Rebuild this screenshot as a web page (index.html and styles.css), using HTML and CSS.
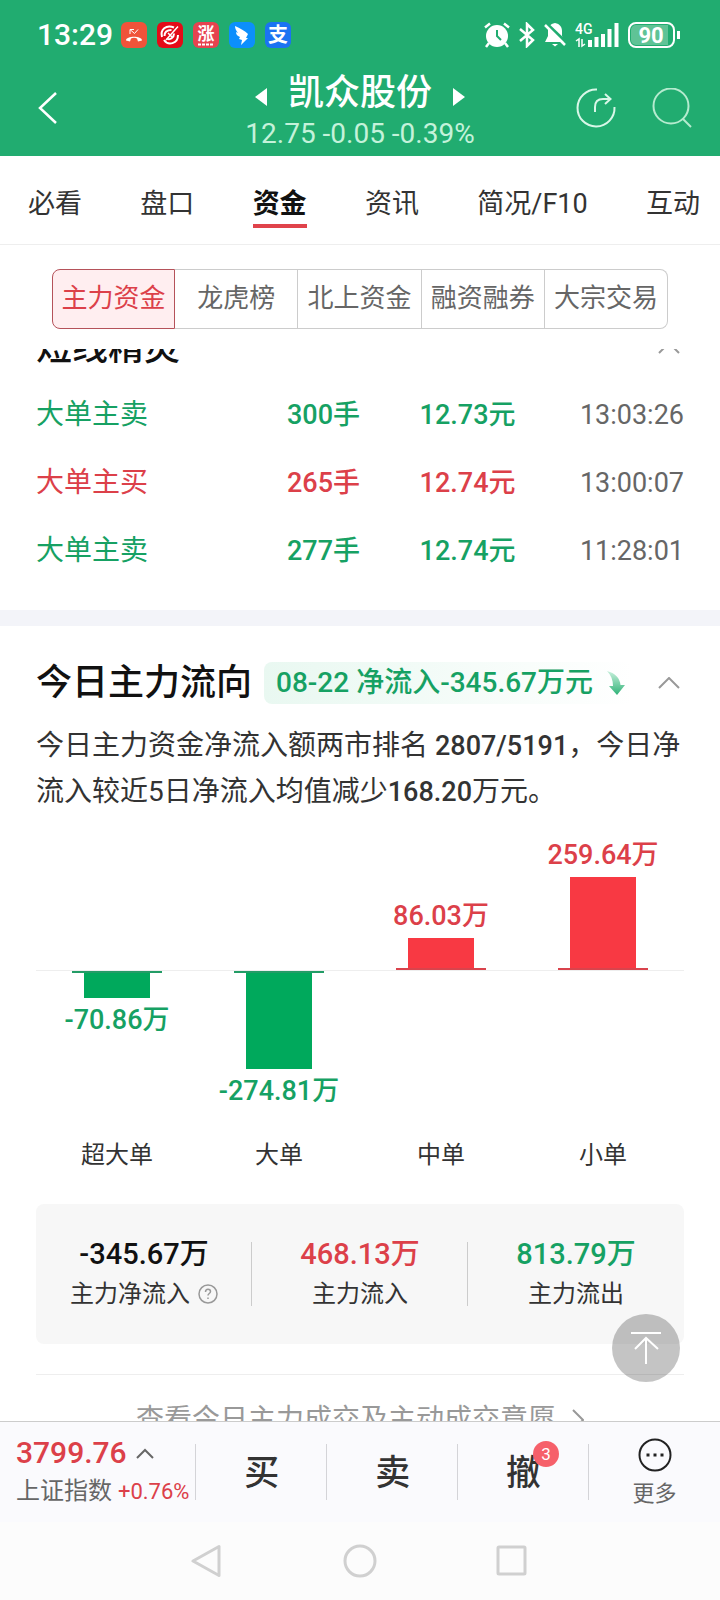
FILE: index.html
```
<!DOCTYPE html>
<html lang="zh-CN">
    <head>
        <meta charset="utf-8">
        <title>凯众股份 - 资金</title>
        <meta name="viewport" content="width=device-width, initial-scale=1.0">
        <link rel="stylesheet" href="styles.css">
    </head>
    <body>
        <header>
            <div class="status">
                <span class="clock">13:29</span>
                <div class="apps">
                    <svg class="app" viewBox="0 0 26 26">
                        <rect width="26" height="26" rx="6" fill="#f0533a"/>
                        <path d="M5 18.500c0-5 16-5 16 0l-4 1-1-3c-2-1-4-1-6 0l-1 3z" fill="#fff"/>
                        <path d="M9 12V7.500h4M9 7.500l4.500 4L17 7.500" fill="none" stroke="#fff" stroke-width="1"/>
                    </svg>
                    <svg class="app" viewBox="0 0 26 26">
                        <rect width="26" height="26" rx="6" fill="#e30b17"/>
                        <path d="M17 5.500C9 2 3 8 5 15M7 18c4 6 14 4 14-5M7.500 14c0-4 3-6 7-6M10 16.500c3 2 7-1 7-5" fill="none" stroke="#fff" stroke-width="2"/>
                        <path d="M21 4.500L9 18M11 11l4 4" stroke="#fff" stroke-width="1.500"/>
                    </svg>
                    <svg class="app" viewBox="0 0 26 26">
                        <rect width="26" height="26" rx="6" fill="#e6434f"/>
                        <text x="13" y="18" class="app-text" font-size="17">涨</text>
                        <path d="M5 22.500h16" stroke="#fff" stroke-width="2" stroke-dasharray="3 1"/>
                    </svg>
                    <svg class="app" viewBox="0 0 26 26">
                        <rect width="26" height="26" rx="6" fill="#0c8ffc"/>
                        <path d="M6 4c5 2 10 5 13 8l-2 4h2l-7 7 1-5-3-1 1-2c-3-1-4-3-4-5l2 1C7 9 6 6 6 4z" fill="#fff"/>
                    </svg>
                    <svg class="app" viewBox="0 0 26 26">
                        <rect width="26" height="26" rx="6" fill="#1b73f2"/>
                        <text x="13" y="20" class="app-text" font-size="20">支</text>
                    </svg>
                </div>
                <div class="signals">
                    <svg width="26" height="26" viewBox="0 0 26 26">
                        <circle cx="13" cy="14" r="11" fill="#fff"/>
                        <path d="M13 8v6l4 4" fill="none" stroke="#21ac70" stroke-width="2"/>
                        <path d="M1 5.500L6 1.500M25 5.500L20 1.500M5 21l-3 4M21 21l3 4" stroke="#fff" stroke-width="2.500"/>
                    </svg>
                    <svg width="16" height="26" viewBox="0 0 16 26">
                        <path d="M1 7l13 11-6 6V2l6 6L1 19" fill="none" stroke="#fff" stroke-width="2.500"/>
                    </svg>
                    <svg width="22" height="26" viewBox="0 0 22 26">
                        <path d="M11 1c5 1 7 4 7 8v5l3 6H1l3-6V9c0-4 2-7 7-8zM8 22h6l-3 2.500z" fill="#fff"/>
                        <path d="M2 1l22 21" stroke="#21ac70" stroke-width="3"/>
                        <path d="M1 3l20 20" stroke="#fff" stroke-width="2.500"/>
                    </svg>
                    <svg width="44" height="26" viewBox="0 0 44 26">
                        <text x="0" y="12" class="net" font-size="14">4G</text>
                        <path d="M1 19l3-2v8M7 17v7l3-2" fill="none" stroke="#fff" stroke-width="1.500"/>
                        <path d="M15 18v7M21.500 15v10M28 12v13M34.500 7v18M41.500 1v24" stroke="#fff" stroke-width="4"/>
                    </svg>
                    <svg width="52" height="26" viewBox="0 0 52 26">
                        <rect x="1" y="1" width="45" height="24" rx="7" fill="#21ac70" stroke="#fff" stroke-width="2"/>
                        <path d="M8 3h32v20H8a5 5 0 0 1-5-5V8a5 5 0 0 1 5-5z" fill="#5fc396"/>
                        <text x="23" y="21" class="battery" font-size="22">90</text>
                        <path d="M50.500 9v8" stroke="#fff" stroke-width="3"/>
                    </svg>
                </div>
            </div>
            <div class="titlebar">
                <button class="back" aria-label="返回">
                    <svg width="22" height="36" viewBox="0 0 22 36"><path d="M19 3L3 18l16 15" fill="none" stroke="#fff" stroke-width="2.500"/></svg>
                </button>
                <div class="stock">
                    <div class="stock-name">
                        <svg width="12" height="18" viewBox="0 0 12 18"><path d="M12 0v18L0 9z" fill="#fff"/></svg>
                        <h1>凯众股份</h1>
                        <svg width="12" height="18" viewBox="0 0 12 18"><path d="M0 0v18l12-9z" fill="#fff"/></svg>
                    </div>
                    <div class="stock-price">12.75 -0.05 -0.39%</div>
                </div>
                <div class="actions">
                    <button aria-label="分享">
                        <svg width="40" height="40" viewBox="0 0 40 40" fill="none" stroke="#d9f7e8" stroke-width="2">
                            <path d="M21 1.500A18.500 18.500 0 1 0 38.500 19"/>
                            <path d="M19 24v-5c0-5 3-8 8-8h7M29 6l5.500 5-5.500 5"/>
                        </svg>
                    </button>
                    <button aria-label="搜索">
                        <svg width="40" height="40" viewBox="0 0 40 40" fill="none" stroke="#b5ebcf" stroke-width="2">
                            <circle cx="19" cy="18" r="17.500"/>
                            <path d="M31 31l8 8"/>
                        </svg>
                    </button>
                </div>
            </div>
        </header>

        <nav class="tabs">
            <a href="#">必看</a>
            <a href="#">盘口</a>
            <a href="#" class="active">资金</a>
            <a href="#">资讯</a>
            <a href="#">简况/F10</a>
            <a href="#">互动</a>
        </nav>

        <div class="segments">
            <button class="active">主力资金</button>
            <button>龙虎榜</button>
            <button>北上资金</button>
            <button>融资融券</button>
            <button>大宗交易</button>
        </div>

        <main>
            <section class="orders">
                <div class="section-head">
                    <h2>短线精灵</h2>
                    <button class="fold" aria-label="收起">
                        <svg width="22" height="12" viewBox="0 0 22 12"><path d="M1 11L11 1l10 10" fill="none" stroke="#999" stroke-width="2"/></svg>
                    </button>
                </div>
                <table>
                    <tr class="green"><td>大单主卖</td><td>300手</td><td>12.73元</td><td>13:03:26</td></tr>
                    <tr class="red"><td>大单主买</td><td>265手</td><td>12.74元</td><td>13:00:07</td></tr>
                    <tr class="green"><td>大单主卖</td><td>277手</td><td>12.74元</td><td>11:28:01</td></tr>
                </table>
            </section>

            <section class="flow">
                <div class="section-head">
                    <h2>今日主力流向</h2>
                    <div class="tag">
                        08-22 净流入-345.67万元
                        <svg width="18" height="24" viewBox="0 0 18 24">
                            <defs>
                                <linearGradient id="fade" x1="0" y1="0" x2="0" y2="1">
                                    <stop offset="0" stop-color="#c8f0dc"/>
                                    <stop offset="1" stop-color="#2fb277"/>
                                </linearGradient>
                            </defs>
                            <path d="M0 0c8 2 13 7 13.500 14H18L10 24 2 15h4C6 9 4 4 0 0z" fill="url(#fade)"/>
                        </svg>
                    </div>
                    <button class="fold" aria-label="收起">
                        <svg width="22" height="12" viewBox="0 0 22 12"><path d="M1 11L11 1l10 10" fill="none" stroke="#999" stroke-width="2"/></svg>
                    </button>
                </div>
                <p>今日主力资金净流入额两市排名 <span>2807/5191</span>，今日净流入较近5日净流入均值减少<span>168.20</span>万元。</p>

                <div class="chart">
                    <div class="up"></div>
                    <div class="up"></div>
                    <div class="up red"><span>86.03万</span><i style="height: 30px"></i></div>
                    <div class="up red"><span>259.64万</span><i style="height: 91px"></i></div>
                    <div class="down green"><i style="height: 25px"></i><span>-70.86万</span></div>
                    <div class="down green"><i style="height: 96px"></i><span>-274.81万</span></div>
                    <div class="down"></div>
                    <div class="down"></div>
                    <div class="category">超大单</div>
                    <div class="category">大单</div>
                    <div class="category">中单</div>
                    <div class="category">小单</div>
                </div>

                <div class="summary">
                    <div>
                        <strong>-345.67万</strong>
                        <span>主力净流入
                            <svg width="20" height="20" viewBox="0 0 20 20" fill="none" stroke="#999">
                                <circle cx="10" cy="10" r="9" stroke-width="1.500"/>
                                <path d="M7.500 8c0-4 5-3.500 5-.5 0 2-2.500 2-2.500 4M10 13.500v1.500" stroke-width="1.500"/>
                            </svg>
                        </span>
                    </div>
                    <div><strong class="red">468.13万</strong><span>主力流入</span></div>
                    <div><strong class="green">813.79万</strong><span>主力流出</span></div>
                </div>

                <a href="#" class="more-link">查看今日主力成交及主动成交意愿
                    <svg width="12" height="22" viewBox="0 0 12 22"><path d="M1 1l10 10L1 21" fill="none" stroke="#999" stroke-width="2"/></svg>
                </a>
            </section>

            <button class="to-top" aria-label="回到顶部">
                <svg width="30" height="34" viewBox="0 0 30 34" fill="none" stroke="#fff" stroke-width="2"><path d="M0 2h30M15 33V7M4 18L15 7l12 11"/></svg>
            </button>
        </main>

        <footer>
            <a href="#" class="index">
                <span class="index-value">3799.76
                    <svg width="18" height="11" viewBox="0 0 18 11"><path d="M1 10l8-8 8 8" fill="none" stroke="#666" stroke-width="2"/></svg>
                </span>
                <span class="index-name">上证指数 <em>+0.76%</em></span>
            </a>
            <button class="trade">买</button>
            <button class="trade">卖</button>
            <button class="trade"><span>撤<b>3</b></span></button>
            <button class="more">
                <svg width="34" height="34" viewBox="0 0 34 34">
                    <circle cx="17" cy="17" r="15.500" fill="none" stroke="#222" stroke-width="2"/>
                    <path d="M8.500 17h3M15.500 17h3M22.500 17h3" stroke="#222" stroke-width="3"/>
                </svg>
                更多
            </button>
        </footer>

        <div class="system-nav">
            <button aria-label="返回">
                <svg width="34" height="34" viewBox="0 0 34 34"><path d="M28 2.500v29L2 17z" fill="none" stroke="#d0d0d0" stroke-width="3" stroke-linejoin="round"/></svg>
            </button>
            <button aria-label="主页">
                <svg width="34" height="34" viewBox="0 0 34 34"><circle cx="17" cy="17" r="15" fill="none" stroke="#d0d0d0" stroke-width="3"/></svg>
            </button>
            <button aria-label="最近任务">
                <svg width="34" height="34" viewBox="0 0 34 34"><rect x="3" y="3" width="27" height="27" rx="1" fill="none" stroke="#d0d0d0" stroke-width="3"/></svg>
            </button>
        </div>
    </body>
</html>
```
FILE: styles.css
```
* {
    box-sizing: border-box;
}

body {
    display: flex;
    flex-direction: column;
    height: 100vh;
    margin: 0;
    background: #fff;
    color: #333;
    font-family: Roboto, "Noto Sans CJK SC", sans-serif;
    font-size: 27px;
    line-height: 36px;
}

button {
    margin: 0;
    padding: 0;
    border: 0;
    background: none;
    color: inherit;
    font: inherit;
    cursor: pointer;
}

a {
    color: inherit;
    text-decoration: none;
}

svg {
    flex: none;
}

h1, h2, p {
    margin: 0;
}

h1, h2 {
    font-size: 36px;
    font-weight: 500;
}

.red {
    color: #dc4049;
}

.green {
    color: #16a163;
}

/* header */
header {
    background: #21ac70;
    color: #fff;
}

.status {
    display: flex;
    align-items: center;
    gap: 8px;
    height: 70px;
    padding: 0 40px 0 37px;
}

.clock {
    font-size: 30px;
    font-weight: 500;
}

.apps, .signals {
    display: flex;
    gap: 10px;
}

.signals {
    gap: 9px;
    margin-left: auto;
}

.app {
    width: 26px;
    height: 26px;
}

.app-text, .battery {
    fill: #fff;
    font-weight: 700;
    text-anchor: middle;
}

.net {
    fill: #fff;
    font-weight: 500;
}

.titlebar {
    display: grid;
    grid-template-columns: 1fr auto 1fr;
    height: 86px;
    padding: 0 28px;
}

.back, .actions {
    display: flex;
    align-items: center;
    height: 76px;
}

.back {
    padding-left: 9px;
}

.actions {
    justify-content: flex-end;
    gap: 36px;
}

.actions button {
    display: flex;
}

.stock {
    text-align: center;
}

.stock-name {
    display: flex;
    align-items: center;
    justify-content: center;
    gap: 21px;
    height: 46px;
}

.stock-name svg {
    margin-top: 8px;
}

.stock-price {
    color: #c4f2da;
    font-size: 28px;
    line-height: 36px;
}

/* tabs */
.tabs {
    display: flex;
    justify-content: space-between;
    padding: 24px 20px 16px 28px;
    border-bottom: 1px solid #eee;
    white-space: nowrap;
}

.tabs a {
    height: 48px;
    line-height: 48px;
}

.tabs .active {
    border-bottom: 4px solid #e0434b;
    color: #111;
    font-weight: 700;
}

.segments {
    display: grid;
    grid-template-columns: repeat(5, 1fr);
    margin: 24px 52px 20px;
}

.segments button {
    height: 60px;
    padding-bottom: 2px;
    border: 1px solid #ccc;
    border-left-width: 0;
    color: #666;
    font-size: 26px;
    white-space: nowrap;
}

.segments .active {
    border: 1px solid #b5525a;
    border-radius: 8px 0 0 8px;
    background: #ffeef0;
    color: #dc4049;
}

.segments button:last-child {
    border-radius: 0 8px 8px 0;
}

/* content */
main {
    position: relative;
    flex: 1;
    min-height: 0;
    overflow: hidden;
}

section {
    padding: 0 36px;
}

.section-head {
    display: flex;
    align-items: center;
    height: 42px;
    color: #111;
    white-space: nowrap;
}

.fold {
    display: flex;
    margin-left: auto;
    padding: 0 4px;
}

/* list is scrolled, its head is partly under the segments */
.orders {
    margin-top: -22px;
    padding-bottom: 25px;
    border-bottom: 16px solid #f3f4f9;
}

.orders table {
    width: 100%;
    margin-top: 12px;
    border-collapse: collapse;
    font-weight: 500;
}

.orders td {
    width: 24%;
    height: 68px;
    padding: 0;
    text-align: right;
}

.orders td:first-child {
    width: 26%;
    font-size: 28px;
    font-weight: 400;
    text-align: left;
}

.orders td:last-child {
    width: 26%;
    color: #666;
    font-weight: 400;
}

.flow {
    padding-top: 36px;
}

.tag {
    display: flex;
    align-items: center;
    gap: 14px;
    height: 42px;
    margin-left: 12px;
    padding: 0 8px 0 12px;
    border-radius: 8px;
    background: linear-gradient(90deg, #e9f8f1, #fff);
    color: #16a163;
    font-size: 28px;
    font-weight: 500;
}

.flow p {
    margin: 19px -8px 0 0;
    font-size: 28px;
    line-height: 45px;
}

.flow p span {
    font-size: 27px;
    font-weight: 500;
}

.chart {
    display: grid;
    grid-template-columns: repeat(4, 1fr);
}

.up, .down {
    display: flex;
    flex-direction: column;
    align-items: center;
    font-weight: 500;
}

.up {
    justify-content: flex-end;
    height: 155px;
}

.down {
    height: 167px;
    border-top: 1px solid #eee;
}

.chart i {
    width: 66px;
}

.up i {
    margin-top: 4px;
    background: #f83943;
}

.down i {
    margin-bottom: 4px;
    background: #00a95c;
}

/* short line where the bar meets the axis */
.up.red::after, .down.green::before {
    content: "";
    width: 90px;
    height: 2px;
    background: #d9434c;
}

.down.green::before {
    background: #239c66;
}

.category {
    font-size: 24px;
    text-align: center;
}

.summary {
    display: grid;
    grid-template-columns: repeat(3, 1fr);
    margin: 31px 0 30px;
    padding: 30px 0;
    border-radius: 8px;
    background: #f7f7f7;
}

.summary div {
    display: flex;
    flex-direction: column;
    align-items: center;
    background: linear-gradient(#ccc, #ccc) right center / 1px 64px no-repeat;
    line-height: 40px;
}

.summary div:last-child {
    background: none;
}

.summary strong {
    font-size: 29px;
    font-weight: 500;
}

.summary strong:not([class]) {
    color: #111;
}

.summary span {
    display: flex;
    align-items: center;
    gap: 8px;
    font-size: 24px;
}

.more-link {
    display: flex;
    align-items: center;
    justify-content: center;
    gap: 16px;
    border-top: 1px solid #eee;
    color: #999;
    font-size: 28px;
    line-height: 90px;
}

.to-top {
    position: absolute;
    right: 40px;
    bottom: 39px;
    display: flex;
    align-items: center;
    justify-content: center;
    width: 68px;
    height: 68px;
    border-radius: 50%;
    background: rgba(0, 0, 0, 0.23);
}

/* bottom bar */
footer {
    display: grid;
    grid-template-columns: 3fr 2fr 2fr 2fr 2fr;
    height: 101px;
    border-top: 1px solid #ccc;
    background: #fafafd;
    white-space: nowrap;
}

footer > :not(:last-child) {
    background: linear-gradient(#d4d4d8, #d4d4d8) right center / 1px 56px no-repeat;
}

.index {
    display: flex;
    flex-direction: column;
    padding: 12px 0 0 16px;
    line-height: 38px;
}

.index-value {
    display: flex;
    align-items: center;
    gap: 9px;
    color: #dc4049;
    font-size: 30px;
    font-weight: 500;
}

.index-name {
    color: #666;
    font-size: 24px;
}

.index-name em {
    color: #dc4049;
    font-size: 22px;
    font-style: normal;
}

.trade {
    padding-top: 4px;
    font-size: 35px;
    font-weight: 500;
}

.trade span {
    position: relative;
}

.trade b {
    position: absolute;
    top: -12px;
    right: -18px;
    width: 26px;
    height: 26px;
    border-radius: 50%;
    background: #f6606a;
    color: #fff;
    font-size: 17px;
    font-weight: 400;
    line-height: 26px;
}

.more {
    display: flex;
    flex-direction: column;
    align-items: center;
    padding-top: 16px;
    color: #666;
    font-size: 22px;
    line-height: 44px;
}

.system-nav {
    display: flex;
    align-items: center;
    justify-content: center;
    gap: 118px;
    height: 78px;
    background: #fcfcfc;
}

.system-nav button {
    display: flex;
}
```
